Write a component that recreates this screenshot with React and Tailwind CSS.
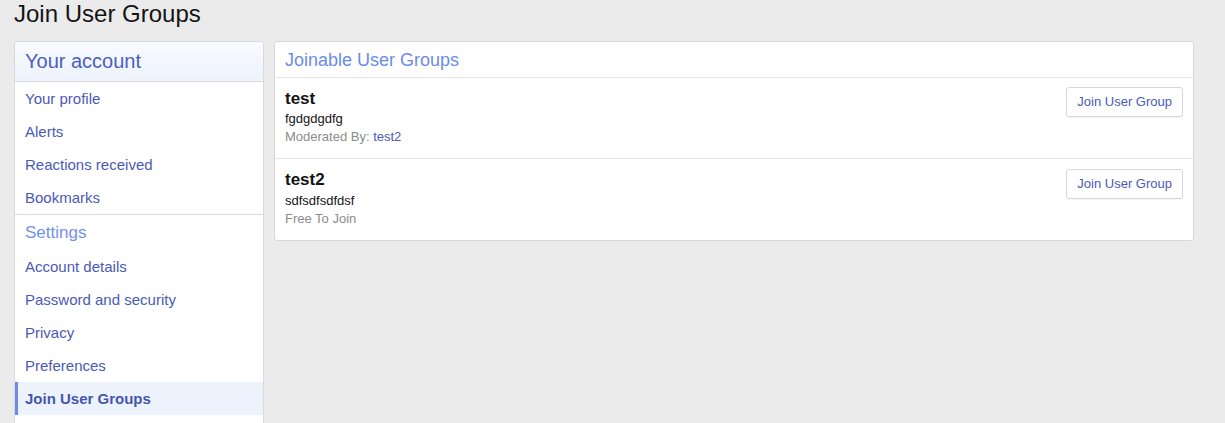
import React from 'react';

const accountLinks = ['Your profile', 'Alerts', 'Reactions received', 'Bookmarks'];
const settingsLinks = ['Account details', 'Password and security', 'Privacy', 'Preferences'];

const groups = [
    { id: 1, title: 'test', description: 'fgdgdgdfg', moderator: 'test2' },
    { id: 2, title: 'test2', description: 'sdfsdfsdfdsf', moderator: null },
];

const NavLink = ({ label, active }) => (
    <a
        href="#"
        className={`block h-[33px] leading-[33px] text-[15px] ${active ? 'bg-[#edf3fd] border-l-[3px] border-[#6d8de3] pl-[7px] font-bold text-[#4556ad]' : 'pl-[10px] text-[#4a5ab8]'}`}
    >
        {label}
    </a>
);

const App = () => {
    return (
        <div className="min-h-[423px] bg-[#ebebeb] text-[#141414]" style={{ fontFamily: '"Liberation Sans", Arial, sans-serif' }}>
            <h1 className="px-[14px] h-[41px] text-[24px] leading-[28px] font-normal">Join User Groups</h1>

            <div className="flex items-start gap-[10px] pl-[14px]">
                {/* sidebar */}
                <div className="w-[250px] bg-white border border-[#dadada] rounded-t-[3px]">
                    <div className="h-[40px] pl-[10px] leading-[39px] text-[20px] text-[#4b5ec0] bg-gradient-to-b from-[#f8fafe] to-[#edf2fc] border-b border-[#dadada] rounded-t-[3px]">
                        Your account
                    </div>
                    <div>
                        {accountLinks.map(l => <NavLink key={l} label={l} />)}
                    </div>
                    <div className="border-t border-[#dadada]">
                        <div className="h-[35px] leading-[35px] pl-[10px] text-[17px] text-[#7491ea]">Settings</div>
                        {settingsLinks.map(l => <NavLink key={l} label={l} />)}
                        <NavLink label="Join User Groups" active />
                        <div className="h-[10px]" />
                    </div>
                </div>

                {/* main block */}
                <div className="w-[920px] bg-white border border-[#d8d8d8] rounded-[3px]">
                    <div className="h-[36px] pl-[10px] leading-[36px] text-[18px] text-[#6b8ce8] border-b border-[#e3e3e3]">
                        Joinable User Groups
                    </div>
                    {groups.map((g, i) => (
                        <div key={g.id} className={`flex justify-between px-[10px] pt-[10px] ${i > 0 ? 'border-t border-[#e3e3e3] h-[82px]' : 'h-[80px]'}`}>
                            <div>
                                <div className="text-[17px] font-bold leading-[21px]">{g.title}</div>
                                <div className={`text-[13px] leading-[18px] ${i > 0 ? 'mt-[2px]' : 'mt-[1px]'}`}>{g.description}</div>
                                <div className="text-[13px] leading-[18px] text-[#8c8c8c]">
                                    {g.moderator ? (
                                        <>Moderated By: <a href="#" className="text-[#4a5ab8]">{g.moderator}</a></>
                                    ) : 'Free To Join'}
                                </div>
                            </div>
                            <button className={`h-[30px] px-[10px] text-[13px] text-[#4a5ab8] bg-white border border-[#d8d8d8] rounded-[3px] shadow-[0_1px_1px_rgba(0,0,0,0.05)] ${i === 0 ? 'mt-[-1px]' : ''}`}>
                                Join User Group
                            </button>
                        </div>
                    ))}
                </div>
            </div>
        </div>
    );
};

export default App;
